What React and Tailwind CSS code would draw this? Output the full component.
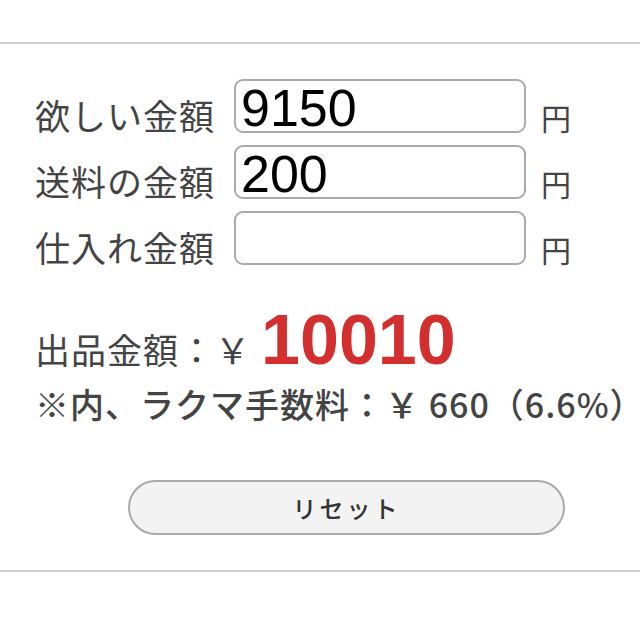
import React, { useState } from "react";

const jp = { fontFamily: '"Noto Sans CJK JP", "Noto Sans", sans-serif' };
const num = { fontFamily: '"Liberation Sans", Arial, sans-serif' };

const Row = ({ label, value, onChange }) => (
  <div className="flex items-end h-[54px]">
    <span className="w-[199px] text-[35px] tracking-[1px] leading-none text-[#444] pb-[1px]">{label}</span>
    <input
      value={value}
      onChange={(e) => onChange(e.target.value)}
      style={num}
      className="w-[292px] h-[54px] border-2 border-[#aaa] rounded-[9px] px-[5px] pt-[4px] text-[52px] leading-none text-black outline-none bg-white"
    />
    <span className="ml-[15px] text-[30px] leading-none text-[#444] pb-[1px]">円</span>
  </div>
);

export default function App() {
  const [want, setWant] = useState("9150");
  const [ship, setShip] = useState("200");
  const [cost, setCost] = useState("");

  return (
    <div style={jp} className="w-[640px] h-[640px] bg-white overflow-hidden">
      <div className="h-[42px]" />
      <div className="border-t-2 border-[#d0d0d0]" />

      <div className="pl-[35px] pt-[35px] flex flex-col gap-[12px]">
        <Row label="欲しい金額" value={want} onChange={setWant} />
        <Row label="送料の金額" value={ship} onChange={setShip} />
        <Row label="仕入れ金額" value={cost} onChange={setCost} />
      </div>

      <div className="pl-[35px] pt-[50px]">
        <div className="flex items-end h-[52px]">
          <span className="text-[35px] tracking-[1px] leading-none text-[#444] pb-[1px]">出品金額：￥</span>
          <span style={num} className="ml-[10px] text-[70px] leading-none font-bold text-[#d32f2f] -mb-[8px]">10010</span>
        </div>
        <div className="mt-[20px] text-[34px] tracking-[1px] leading-none font-medium text-[#444] whitespace-nowrap">
          ※内、ラクマ手数料：￥ 660（6.6%）
        </div>
      </div>

      <div className="pl-[128px] pt-[59px]">
        <button className="w-[437px] h-[55px] rounded-full border-2 border-[#aaa] bg-[#f3f3f3] text-[24px] font-medium text-[#333] tracking-[3px]">
          リセット
        </button>
      </div>

      <div className="mt-[35px] border-t-2 border-[#d0d0d0]" />
    </div>
  );
}
